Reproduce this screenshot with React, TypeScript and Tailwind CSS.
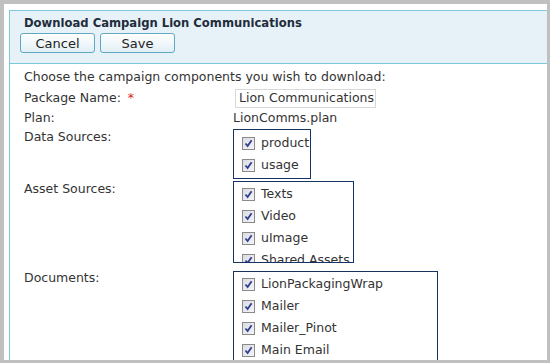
import React from "react";

const font = { fontFamily: '"DejaVu Sans", Verdana, sans-serif' };

function Check() {
  return (
    <span className="inline-flex h-[13px] w-[13px] shrink-0 items-center justify-center border border-[#8a8a8a] bg-gradient-to-br from-[#dcdce4] to-[#f4f4f8]">
      <svg width="9" height="9" viewBox="0 0 9 9">
        <path d="M1.5 4.5 L3.6 7 L7.6 1.2" fill="none" stroke="#2d3f8f" strokeWidth="1.8" />
      </svg>
    </span>
  );
}

function Item({ label }: { label: string }) {
  return (
    <div className="flex h-[22px] items-center gap-[6px] whitespace-nowrap pl-[8px]">
      <Check />
      <span>{label}</span>
    </div>
  );
}

function Btn({ children }: { children: React.ReactNode }) {
  return (
    <button className="h-[20px] w-[75px] rounded-[3px] border border-[#5fa9c2] bg-gradient-to-b from-white to-[#e2eff5] text-[13px] leading-none text-[#222]">
      {children}
    </button>
  );
}

export default function App() {
  return (
    <div className="h-[363px] w-[550px] overflow-hidden bg-[#c0c0c0] pl-[4px] pt-[4px] pr-[3px]" style={font}>
      <div className="h-[356px] overflow-hidden bg-white pl-[5px] pt-[6px]">
        <div className="h-full border-l border-t border-[#7ccad8] text-[#333] text-[12.5px]">
          <div className="h-[53px] border-b border-[#7ccad8] bg-[#e7f2f8]">
            <div className="pl-[14px] pt-[3px] text-[11.6px] font-bold leading-[18px] text-[#1f2d3d]">
              Download Campaign Lion Communications
            </div>
            <div className="mt-[1px] flex gap-[5px] pl-[10px]">
              <Btn>Cancel</Btn>
              <Btn>Save</Btn>
            </div>
          </div>
          <div className="pl-[14px] pt-[2px]">
            <div className="h-[21px] leading-[21px]">Choose the campaign components you wish to download:</div>
            <div className="flex h-[22px] items-center">
              <div className="w-[211px]">
                Package Name: <span className="ml-[3px] text-[#e02020]">*</span>
              </div>
              <div className="flex h-[19px] w-[141px] items-center border border-[#d8d8d8] pl-[3px]">Lion Communications</div>
            </div>
            <div className="flex h-[19px] items-center">
              <div className="w-[209px]">Plan:</div>
              <div>LionComms.plan</div>
            </div>
            <div className="flex">
              <div className="w-[209px] leading-[18px]">Data Sources:</div>
              <div className="mt-[1px] w-[78px] border border-[#17335f] py-[2px]">
                <Item label="product" />
                <Item label="usage" />
              </div>
            </div>
            <div className="mt-[2px] flex">
              <div className="w-[209px] leading-[16px]">Asset Sources:</div>
              <div className="h-[82px] w-[121px] overflow-hidden border border-[#17335f] pb-[2px] pt-[1px]">
                <Item label="Texts" />
                <Item label="Video" />
                <Item label="uImage" />
                <Item label="Shared Assets" />
              </div>
            </div>
            <div className="mt-[8px] flex">
              <div className="w-[209px] leading-[14px]">Documents:</div>
              <div className="w-[205px] border border-[#17335f] pb-[12px] pt-[1px]">
                <Item label="LionPackagingWrap" />
                <Item label="Mailer" />
                <Item label="Mailer_Pinot" />
                <Item label="Main Email" />
              </div>
            </div>
          </div>
        </div>
      </div>
    </div>
  );
}
